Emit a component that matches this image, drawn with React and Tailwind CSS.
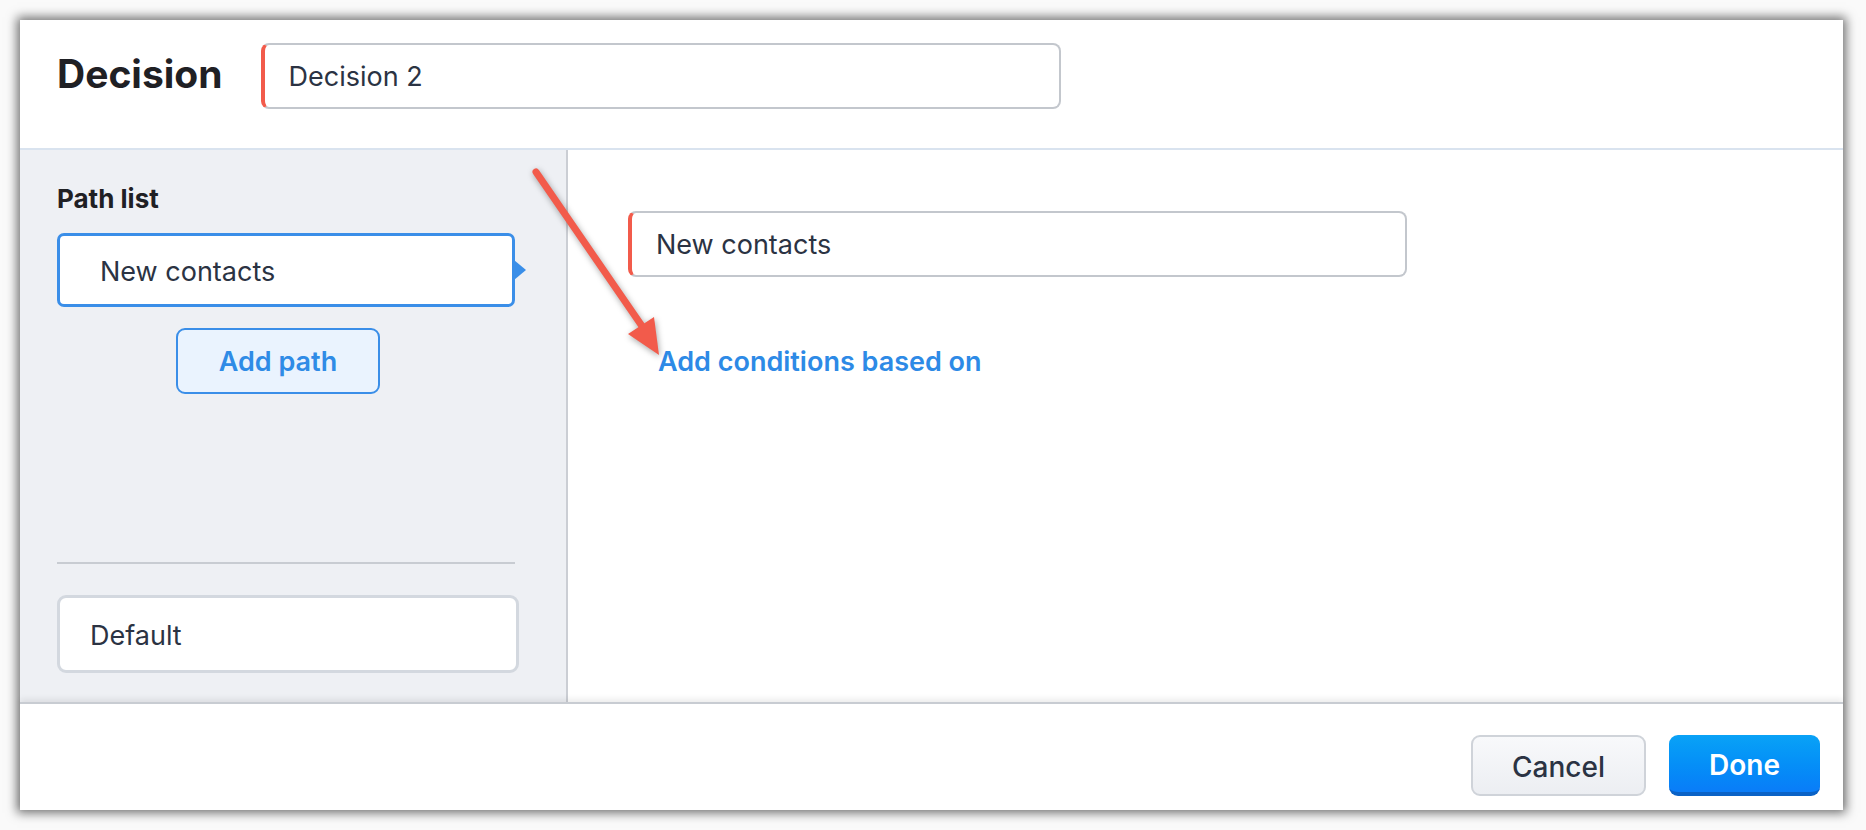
import React from 'react'

const RedInput = ({ value, className }) => (
  <div
    className={`flex items-center rounded-[8px] border-2 border-l-[4px] border-[#c3c7cd] border-l-[#f25b4b] bg-white pl-[24px] pt-[3px] text-[27px] text-[#2b3343] ${className}`}
  >
    {value}
  </div>
)

const Arrow = () => (
  <svg
    className="pointer-events-none absolute left-0 top-0"
    width="1823"
    height="790"
    viewBox="0 0 1823 790"
    style={{ filter: 'drop-shadow(1px 2px 3px rgba(0,0,0,0.35))' }}
  >
    <line x1="516" y1="152" x2="624" y2="309" stroke="#f25b4b" strokeWidth="7" strokeLinecap="round" />
    <polygon points="639,335 608,314 634,297" fill="#f25b4b" />
  </svg>
)

const App = () => {
  return (
    <div className="h-[830px] w-[1866px] bg-[#fafafa] pl-[20px] pt-[20px] font-['Inter',sans-serif]">
      <div className="relative flex h-[790px] w-[1823px] flex-col bg-white shadow-[0_0_10px_3px_rgba(0,0,0,0.55)]">
        {/* header */}
        <div className="flex h-[130px] items-start gap-[38px] border-b-2 border-[#d9e3ef] pl-[37px] pt-[23px]">
          <h1 className="mt-[6px] text-[39px] font-bold leading-[50px] text-[#1f2024]">Decision</h1>
          <RedInput value="Decision 2" className="h-[66px] w-[800px]" />
        </div>

        {/* body */}
        <div className="flex flex-1">
          <div className="flex w-[548px] flex-col border-r-2 border-[#cbced4] bg-[#eef0f4] px-[37px] pb-[29px] pt-[33px]">
            <h2 className="text-[26px] font-bold leading-[32px] text-[#1f2024]">Path list</h2>
            <div className="relative mt-[18px] flex h-[74px] w-[458px] items-center rounded-[7px] border-[3px] border-[#3a8ee8] bg-white pl-[40px] pt-[4px] text-[27px] text-[#2b3343]">
              New contacts
              <span className="absolute right-[-14px] top-1/2 h-0 w-0 -translate-y-1/2 border-y-[10px] border-l-[12px] border-y-transparent border-l-[#3a8ee8]"></span>
            </div>
            <button className="ml-[119px] mt-[21px] h-[66px] w-[204px] rounded-[9px] border-2 border-[#3a8ee8] bg-[#eaf3fe] pt-[3px] text-[27px] font-semibold text-[#2f8be6]">
              Add path
            </button>
            <div className="flex-1"></div>
            <div className="h-[2px] w-[458px] bg-[#c8ccd2]"></div>
            <div className="mt-[31px] flex h-[78px] w-[462px] items-center rounded-[9px] border-[3px] border-[#d3d8df] bg-white pl-[30px] pt-[4px] text-[27px] text-[#2b3343]">
              Default
            </div>
          </div>

          <div className="flex flex-1 flex-col pl-[60px] pt-[61px]">
            <RedInput value="New contacts" className="h-[66px] w-[779px]" />
            <a className="ml-[30px] mt-[69px] text-[27px] font-semibold leading-[32px] text-[#2d8ae6]">
              Add conditions based on
            </a>
          </div>
        </div>

        {/* footer */}
        <div className="flex h-[108px] items-start justify-end gap-[23px] border-t-2 border-[#c8ccd2] pr-[23px] pt-[31px] shadow-[0_-3px_6px_rgba(0,0,0,0.08)]">
          <button className="h-[61px] w-[175px] rounded-[9px] border-2 border-[#cfd3d9] bg-gradient-to-b from-[#f8f9fb] to-[#eceef2] pt-[2px] text-[28px] font-medium text-[#2b3343]">
            Cancel
          </button>
          <button className="h-[61px] w-[151px] rounded-[9px] border-b-[4px] border-[#0a62c6] bg-gradient-to-b from-[#0aa2f6] to-[#0a7cf8] pt-[2px] text-[28px] font-semibold text-white">
            Done
          </button>
        </div>

        <Arrow />
      </div>
    </div>
  )
}

export default App
